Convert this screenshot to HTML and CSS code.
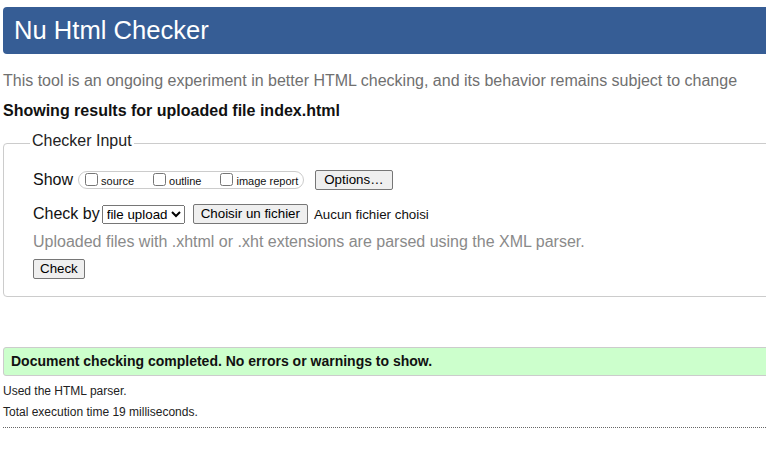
FILE: index.html
```html
<!DOCTYPE html>
<html lang="en">
<head>
<meta charset="utf-8">
<title>Nu Html Checker</title>
<link rel="stylesheet" href="styles.css">
</head>
<body>
<div class="page">
  <header class="masthead"><h1 class="title">Nu Html Checker</h1></header>
  <p class="intro">This tool is an ongoing experiment in better HTML checking, and its behavior remains subject to change</p>
  <p class="results-for">Showing results for uploaded file index.html</p>
  <fieldset class="checker">
    <legend class="checker-legend">Checker Input</legend>
    <div class="row">
      <span class="row-label">Show</span>
      <span class="pill">
        <label class="opt"><input type="checkbox" class="cb"><span class="opt-text">source</span></label>
        <label class="opt"><input type="checkbox" class="cb"><span class="opt-text">outline</span></label>
        <label class="opt"><input type="checkbox" class="cb"><span class="opt-text">image report</span></label>
      </span>
      <button type="button" class="btn btn-options">Options…</button>
    </div>
    <div class="row row-checkby">
      <span class="row-label">Check by</span>
      <select class="sel"><option>file upload</option></select>
      <button type="button" class="btn btn-file">Choisir un fichier</button>
      <span class="file-status">Aucun fichier choisi</span>
    </div>
    <p class="hint">Uploaded files with .xhtml or .xht extensions are parsed using the XML parser.</p>
    <button type="button" class="btn btn-check">Check</button>
  </fieldset>
  <div class="success">Document checking completed. No errors or warnings to show.</div>
  <p class="stat stat-first">Used the HTML parser.</p>
  <p class="stat">Total execution time 19 milliseconds.</p>
  <hr class="dots">
</div>
</body>
</html>
```
FILE: styles.css
```css
html, body {
  margin: 0;
  padding: 0;
  overflow: hidden;
  background: #fff;
}
body {
  font-family: "Liberation Sans", Arial, sans-serif;
  color: #111;
}
.page {
  width: 800px;
  padding-top: 7px;
}
.masthead {
  margin-left: 3px;
  height: 47px;
  background: #365d95;
  border-radius: 4px 0 0 4px;
}
.title {
  margin: 0;
  padding-left: 11px;
  font-size: 25.6px;
  line-height: 47px;
  font-weight: normal;
  color: #fff;
}
.intro {
  margin: 17px 0 0 3px;
  font-size: 16px;
  line-height: 20px;
  color: #707070;
}
.results-for {
  margin: 10px 0 0 3px;
  font-size: 16px;
  line-height: 20px;
  font-weight: bold;
  color: #111;
}
.checker {
  margin: 11px 0 0 3px;
  padding: 16px 0 17px 29px;
  border: 1px solid #cccccc;
  border-radius: 4px 0 0 4px;
  min-width: 0;
}
.checker-legend {
  margin-left: -3px;
  padding: 0 2px 4px;
  font-size: 16px;
  line-height: 18px;
  color: #222;
}
.row {
  display: flex;
  align-items: center;
  height: 20px;
}
.row-checkby {
  margin-top: 14px;
}
.row-label {
  font-size: 16px;
  line-height: 20px;
  color: #111;
}
.pill {
  display: inline-flex;
  align-items: center;
  gap: 19px;
  box-sizing: border-box;
  height: 18px;
  margin-left: 5px;
  padding: 0 5px 0 6px;
  border: 1px solid #cccccc;
  border-radius: 9px;
}
.opt {
  display: inline-flex;
  align-items: center;
}
.cb {
  width: 13px;
  height: 13px;
  margin: 0 0 2px 0;
}
.opt-text {
  margin-left: 3px;
  padding-top: 2px;
  font-size: 11px;
  line-height: 14px;
  color: #111;
}
.btn {
  box-sizing: border-box;
  height: 20px;
  margin: 0;
  padding: 0 6px;
  font-family: "Liberation Sans", Arial, sans-serif;
  font-size: 13.333px;
  line-height: 18px;
  color: #000;
  background: #efefef;
  border: 1px solid #767676;
  border-radius: 2px;
}
.btn-options {
  margin-left: 11px;
  padding: 0 8px;
}
.sel {
  box-sizing: border-box;
  height: 19px;
  margin-left: 2px;
  font-family: "Liberation Sans", Arial, sans-serif;
  font-size: 13.333px;
  color: #000;
}
.btn-file {
  margin-left: 8px;
  padding: 0 7px;
}
.file-status {
  margin-left: 6px;
  font-size: 13.333px;
  color: #111;
}
.hint {
  margin: 8px 0 0;
  font-size: 16px;
  line-height: 20px;
  color: #8a8a8a;
}
.btn-check {
  display: block;
  margin-top: 7px;
}
.success {
  margin: 50px 0 0 3px;
  height: 27px;
  padding-left: 7px;
  font-size: 14px;
  line-height: 27px;
  font-weight: bold;
  color: #111;
  background: #ccffcc;
  border: 1px solid #cccccc;
  border-radius: 3px 0 0 3px;
}
.stat {
  margin: 7px 0 0 3px;
  font-size: 12px;
  line-height: 14px;
  color: #222;
}
.stat-first {
  margin-top: 8px;
}
.dots {
  margin: 8px 0 0 3px;
  height: 0;
  border: 0;
  border-top: 1px dotted #666;
}
```
